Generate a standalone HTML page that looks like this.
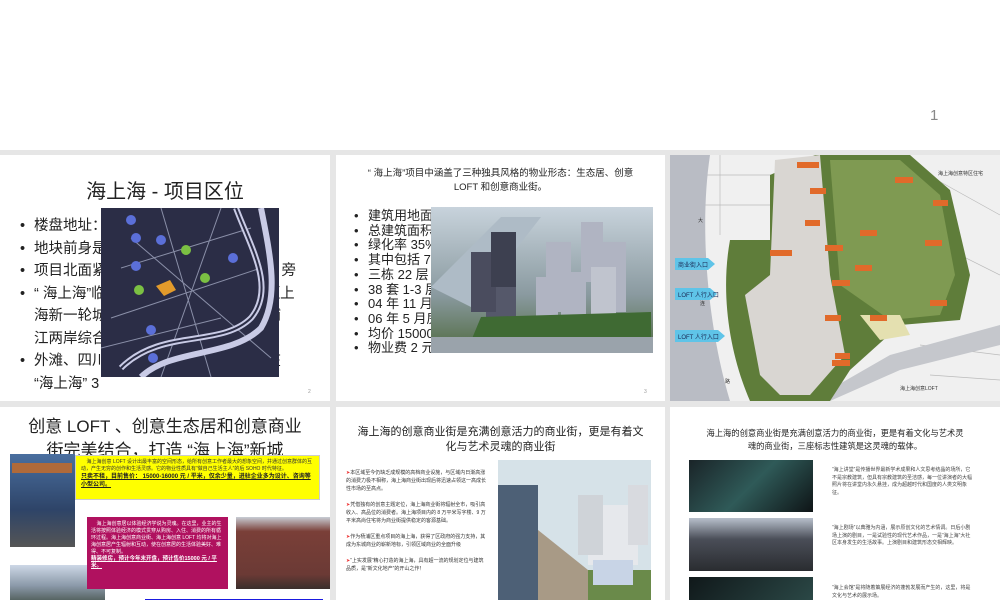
<!DOCTYPE html>
<html><head><meta charset="utf-8"><style>
*{margin:0;padding:0;box-sizing:border-box}
body{width:1000px;height:600px;overflow:hidden;background:#e6e6e6;position:relative;font-family:"Liberation Sans","Noto Sans CJK SC",sans-serif;color:#222}
.a{position:absolute}
.s{position:absolute;background:#fff;overflow:hidden}
.t{position:absolute;white-space:nowrap}
ul.b{position:absolute;list-style:none}
ul.b li{position:relative;padding-left:14px}
ul.b li:before{content:"•";position:absolute;left:0}
.pn{position:absolute;font-size:5px;color:#999}
</style></head><body>
<div class="a" style="left:0;top:0;width:1000px;height:150px;background:#fff"></div>
<div class="t" style="left:930px;top:107px;font-size:15px;color:#888">1</div>

<!-- slide 2 -->
<div class="s" style="left:0;top:155px;width:330px;height:246px">
  <div class="t" style="left:0;width:330px;text-align:center;top:20px;font-size:20px">海上海 - 项目区位</div>
  <ul class="b" style="left:20px;top:60px;font-size:14.5px;line-height:22.5px">
    <li>楼盘地址：</li><li>地块前身是</li><li>项目北面紧<span style="margin-left:175px">旁</span></li>
    <li>“ 海上海”临<span style="margin-left:160px">距上</span><br>海新一轮城<span style="margin-left:160px">浦</span><br>江两岸综合</li>
    <li>外滩、四川<span style="margin-left:160px">在</span><br>“海上海” 3</li>
  </ul>
  <svg class="a" style="left:101px;top:53px" width="178" height="169" viewBox="0 0 178 169">
    <rect width="178" height="169" fill="#2b2d46"/>
    <g stroke="#8a8fa8" stroke-width="1" fill="none">
      <path d="M20 60 L150 20 M10 110 L160 60 M0 140 L120 110 M60 0 L110 169 M120 0 L60 169 M30 30 L170 150"/>
    </g>
    <g stroke="#c9cbe6" stroke-width="6" fill="none">
      <path d="M135 0 C150 40 175 80 150 110 C120 140 60 120 20 160"/>
      <path d="M160 0 C170 50 178 90 160 120 C130 150 70 140 40 169"/>
    </g>
    <path d="M135 0 C150 40 175 80 150 110 C120 140 60 120 20 160" stroke="#2b2d46" stroke-width="2" fill="none"/>
    <g fill="#5b6fd8"><circle cx="30" cy="12" r="5"/><circle cx="35" cy="30" r="5"/><circle cx="60" cy="32" r="5"/><circle cx="35" cy="58" r="5"/><circle cx="132" cy="50" r="5"/><circle cx="50" cy="122" r="5"/><circle cx="52" cy="150" r="5"/></g>
    <g fill="#7bc043"><circle cx="85" cy="42" r="5"/><circle cx="104" cy="70" r="5"/><circle cx="38" cy="82" r="5"/></g>
    <path d="M55 78 l14 -6 l6 10 l-12 6z" fill="#e29a2b"/>
  </svg>
  <div class="pn" style="left:308px;top:234px">2</div>
</div>

<!-- slide 3 -->
<div class="s" style="left:336px;top:155px;width:329px;height:246px">
  <div class="t" style="left:0;width:329px;text-align:center;top:12px;font-size:9.5px;line-height:14px;white-space:normal;padding:0 20px">“ 海上海”项目中涵盖了三种独具风格的物业形态：生态居、创意LOFT 和创意商业街。</div>
  <ul class="b" style="left:18px;top:54px;font-size:13px;line-height:14.7px">
    <li>建筑用地面</li><li>总建筑面积</li><li>绿化率 35%</li><li>其中包括 7</li><li>三栋 22 层</li><li>38 套 1-3 层</li><li>04 年 11 月</li><li>06 年 5 月房</li><li>均价 15000</li><li>物业费 2 元</li>
  </ul>
  <svg class="a" style="left:95px;top:52px" width="222" height="146" viewBox="0 0 222 146">
    <defs><linearGradient id="g1" x1="0" y1="0" x2="0" y2="1"><stop offset="0" stop-color="#c8d3dc"/><stop offset="0.6" stop-color="#8a9aa0"/><stop offset="1" stop-color="#4f6a40"/></linearGradient></defs>
    <rect width="222" height="146" fill="url(#g1)"/>
    <path d="M0 80 L70 10 L110 10 L40 100z" fill="#aebbc6"/>
    <g><rect x="55" y="58" width="30" height="70" fill="#55586a"/><rect x="40" y="45" width="25" height="60" fill="#4a4c5e"/><rect x="60" y="25" width="25" height="55" fill="#3d4050"/></g>
    <g fill="#b0b4c2"><rect x="150" y="15" width="22" height="60"/><rect x="170" y="35" width="25" height="70"/><rect x="115" y="35" width="25" height="70"/><rect x="130" y="65" width="25" height="55"/><rect x="160" y="60" width="25" height="65" fill="#c0c4ce"/><rect x="105" y="70" width="22" height="50"/></g>
    <path d="M50 110 L220 105 L220 132 L40 134z" fill="#3f6a33"/>
    <rect x="0" y="130" width="222" height="16" fill="#9aa3ab"/>
  </svg>
  <div class="pn" style="left:308px;top:234px">3</div>
</div>

<!-- slide 4 site plan -->
<div class="s" style="left:670px;top:155px;width:330px;height:246px;background:#f2f2f2">
  <svg class="a" style="left:0;top:0" width="330" height="246" viewBox="0 0 330 246">
    <rect width="330" height="246" fill="#f0f0f0"/>
    <g stroke="#bbb" fill="none" stroke-width="0.7"><path d="M50 0 L50 80 M30 20 H120 M30 50 H120 M240 10 L330 60 M250 80 L330 120 M250 190 L330 200 M260 220 L330 225"/></g>
    <path d="M0 0 H40 C28 80 40 180 60 246 H0z" fill="#b9bcc4"/>
    <path d="M140 246 L220 200 L330 170 L330 190 L230 215 L160 246z" fill="#c5c7cc"/>
    <path d="M60 85 L100 85 L100 20 L145 0 L240 0 L280 35 L300 120 L290 165 L230 170 L180 215 L160 246 L80 246 C60 200 50 140 60 85z" fill="#5f7d3a"/>
    <path d="M105 5 L150 0 L160 120 L175 200 L140 240 L110 240 L90 220 L75 140 L100 120z" fill="#d9d6d2"/>
    <path d="M160 5 L230 5 L270 40 L285 120 L270 160 L220 165 L170 130z" fill="#7f9a52"/>
    <path d="M210 185 L240 180 L230 160 L190 160z" fill="#e4e0b0"/>
    <g fill="#e16a2a"><rect x="127" y="7" width="22" height="6"/><rect x="140" y="33" width="16" height="6"/><rect x="135" y="65" width="15" height="6"/><rect x="100" y="95" width="22" height="6"/><rect x="155" y="90" width="18" height="6"/><rect x="162" y="125" width="18" height="6"/><rect x="155" y="160" width="16" height="6"/><rect x="165" y="198" width="15" height="6"/><rect x="162" y="205" width="18" height="6"/><rect x="225" y="22" width="18" height="6"/><rect x="263" y="45" width="15" height="6"/><rect x="190" y="75" width="17" height="6"/><rect x="255" y="85" width="17" height="6"/><rect x="185" y="110" width="17" height="6"/><rect x="260" y="145" width="17" height="6"/><rect x="200" y="160" width="17" height="6"/></g>
    <g fill="#5fc4e8"><path d="M5 103 H38 l7 6 l-7 6 H5z"/><path d="M5 133 H40 l7 6 l-7 6 H5z"/><path d="M5 175 H48 l7 6 l-7 6 H5z"/></g>
    <g font-size="6" fill="#1a2a55" font-family="Liberation Sans,Noto Sans CJK SC,sans-serif"><text x="8" y="112">商业街入口</text><text x="8" y="142">LOFT 人行入口</text><text x="8" y="184">LOFT 人行入口</text></g>
    <g font-size="5" fill="#333" font-family="Liberation Sans,Noto Sans CJK SC,sans-serif"><text x="28" y="67">大</text><text x="30" y="150">连</text><text x="55" y="228">路</text><text x="268" y="20">海上海创意特区住宅</text><text x="230" y="235">海上海创意LOFT</text></g>
  </svg>
</div>

<!-- slide 5 -->
<div class="s" style="left:0;top:407px;width:330px;height:193px">
  <div class="t" style="left:0;width:330px;text-align:center;top:8px;font-size:17px;line-height:24px">创意 LOFT 、创意生态居和创意商业<br>街完美结合，打造 “海上海”新城</div>
  <div class="a" style="left:10px;top:47px;width:65px;height:93px;background:linear-gradient(#4a6fa0,#2e4468 60%,#555 100%)"></div>
  <div class="a" style="left:12px;top:56px;width:60px;height:10px;background:#b06a3a"></div>
  <div class="a" style="left:10px;top:158px;width:95px;height:42px;background:linear-gradient(#cdd7e6,#8a98a8 50%,#3d4a40)"></div>
  <div class="a" style="left:236px;top:110px;width:95px;height:72px;background:linear-gradient(#c8cdd4 0,#7a3f38 20%,#6b3a35 80%,#3a2e2c)"></div>
  <div class="a" style="left:75px;top:48px;width:245px;height:45px;background:#ffff00;border:1px solid #ccc;font-size:5px;line-height:7px;padding:3px 5px;color:#333">&nbsp;&nbsp;&nbsp;&nbsp;海上海创意 LOFT 设计出最丰富的空间形态，给所有创意工作者最大的想象空间，并通过创意群体的互动，产生无穷的创作和生活灵感。它的物业性质具有“做自己生活主人”的后 SOHO 时代特征。<br><b style="font-size:6px;line-height:8px;text-decoration:underline;color:#222">只卖不租，目前售价： 15000-16000 元 / 平米，仅余少量，进驻企业多为设计、咨询等小型公司。</b></div>
  <div class="a" style="left:87px;top:110px;width:141px;height:72px;background:#b0115f;font-size:5px;line-height:7px;padding:4px 4px;color:#fff">&nbsp;&nbsp;&nbsp;&nbsp;海上海创意居以体验经济学说为灵魂。在这里，业主的生活将按照体验经济的模式贯穿从购房、入住、消费的所有循环过程。海上海创意商业街、海上海创意 LOFT 均将对海上海创意居产生辐射和互动，使在创意居的生活体验美好、难得、不可复制。<br><b style="font-size:5.5px;text-decoration:underline">精装修房，预计今年末开盘，预计售价15000 元 / 平米。</b></div>
  <div class="a" style="left:145px;top:192px;width:178px;height:10px;background:#1a1ae0"></div>
</div>

<!-- slide 6 -->
<div class="s" style="left:336px;top:407px;width:329px;height:193px">
  <div class="t" style="left:0;width:329px;text-align:center;top:18px;font-size:11px;line-height:15px">海上海的创意商业街是充满创意活力的商业街，更是有着文<br>化与艺术灵魂的商业街</div>
  <div class="a" style="left:10px;top:62px;width:140px;font-size:5px;line-height:8px;color:#333">
    <p><span style="color:#e33">➤</span>本区域至今仍缺乏成规模的高档商业设施，与区域内日渐高涨的消费力极不相称，海上海商业街出现后将迅速占领这一高成长性市场的至高点。</p><br>
    <p><span style="color:#e33">➤</span>凭借独有的创意主题定位，海上海商业街将辐射全市，吸引高收入、高品位的消费者。海上海项目内的 8 万平米写字楼、9 万平米高尚住宅将为商业街提供稳定的客源基础。</p><br>
    <p><span style="color:#e33">➤</span>作为杨浦区重点项目的海上海，获得了区政府的强力支持，其成为东城商业的崭新地标，引领区域商业的全面升级</p><br>
    <p><span style="color:#e33">➤</span>“上实发展”精心打造的海上海，具有超一流的规划定位与建筑品质，是“新文化地产”的开山之作！</p>
  </div>
  <svg class="a" style="left:162px;top:53px" width="153" height="140" viewBox="0 0 153 140">
    <rect width="153" height="140" fill="#d6e2e8"/>
    <rect x="0" y="110" width="153" height="30" fill="#6a8a4a"/>
    <rect x="0" y="25" width="40" height="115" fill="#4d6076"/>
    <rect x="90" y="45" width="50" height="60" fill="#e6e8ec"/><rect x="80" y="35" width="25" height="60" fill="#cfd3d8"/><rect x="130" y="25" width="20" height="60" fill="#d8dadf"/>
    <path d="M40 70 L90 110 L90 140 L40 140z" fill="#a89a86"/>
    <rect x="95" y="100" width="40" height="25" fill="#c8d4e6"/>
  </svg>
</div>

<!-- slide 7 -->
<div class="s" style="left:670px;top:407px;width:330px;height:193px">
  <div class="t" style="left:0;width:330px;text-align:center;top:20px;font-size:8.3px;line-height:13px">海上海的创意商业街是充满创意活力的商业街，更是有着文化与艺术灵<br>魂的商业街，三座标志性建筑是这灵魂的载体。</div>
  <div class="a" style="left:19px;top:53px;width:124px;height:52px;background:linear-gradient(135deg,#1a2428,#2f5a58 50%,#0e1416)"></div>
  <div class="a" style="left:19px;top:111px;width:124px;height:53px;background:linear-gradient(#b8c0cc,#4a4e58 40%,#2a2c30)"></div>
  <div class="a" style="left:19px;top:170px;width:124px;height:30px;background:linear-gradient(135deg,#10181a,#2c4a48)"></div>
  <div class="a" style="left:162px;top:60px;width:140px;font-size:5px;line-height:7.5px;color:#444">“海上讲堂”是传播世界最新学术成果和人文思考结晶的场所，它不是宗教建筑，但具有宗教建筑的圣洁感，每一位讲演者的大幅照片将在讲堂内永久悬挂，成为超越时代和国度的人类文明象征。</div>
  <div class="a" style="left:162px;top:118px;width:140px;font-size:5px;line-height:7.5px;color:#444">“海上剧场”以典雅为内涵，展示原创文化的艺术情调。日后小剧场上演的剧目，一是试验性的现代艺术作品，一是“海上海”大社区本身发生的生活故事。上演剧目和建筑形态交相辉映。</div>
  <div class="a" style="left:162px;top:178px;width:140px;font-size:5px;line-height:7.5px;color:#444">“海上会馆”是将随着策展经济的蓬勃发展而产生的，这里，将是文化与艺术的展示场。</div>
</div>
</body></html>
